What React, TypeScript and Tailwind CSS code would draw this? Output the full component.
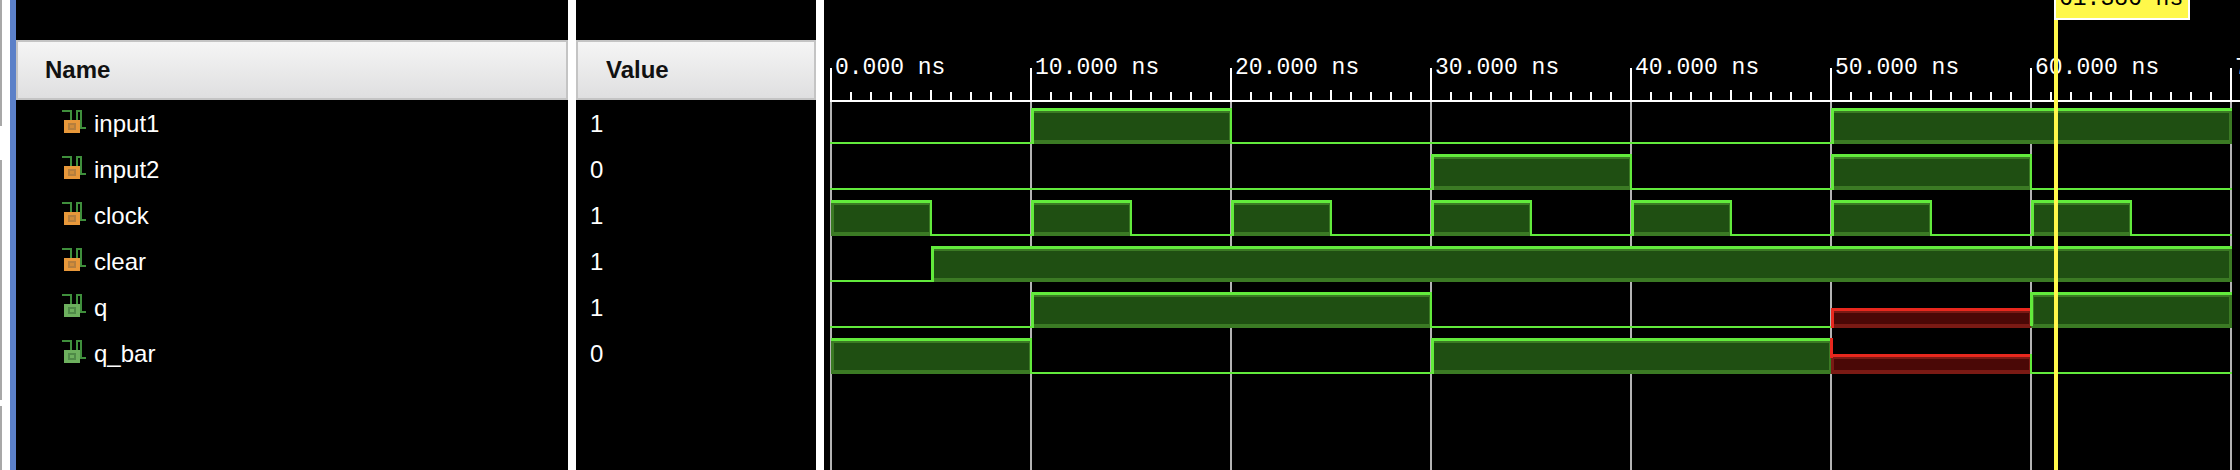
import React from 'react';

interface Signal {
  name: string;
  value: string;
  kind: 'input' | 'output';
  // [start ns, end ns, level]
  segments: [number, number, 'h' | 'l' | 'x'][];
}

const signals: Signal[] = [
  { name: 'input1', value: '1', kind: 'input', segments: [[0, 10, 'l'], [10, 20, 'h'], [20, 50, 'l'], [50, 70, 'h']] },
  { name: 'input2', value: '0', kind: 'input', segments: [[0, 30, 'l'], [30, 40, 'h'], [40, 50, 'l'], [50, 60, 'h'], [60, 70, 'l']] },
  {
    name: 'clock',
    value: '1',
    kind: 'input',
    segments: [[0, 5, 'h'], [5, 10, 'l'], [10, 15, 'h'], [15, 20, 'l'], [20, 25, 'h'], [25, 30, 'l'], [30, 35, 'h'], [35, 40, 'l'], [40, 45, 'h'], [45, 50, 'l'], [50, 55, 'h'], [55, 60, 'l'], [60, 65, 'h'], [65, 70, 'l']],
  },
  { name: 'clear', value: '1', kind: 'input', segments: [[0, 5, 'l'], [5, 70, 'h']] },
  { name: 'q', value: '1', kind: 'output', segments: [[0, 10, 'l'], [10, 30, 'h'], [30, 50, 'l'], [50, 60, 'x'], [60, 70, 'h']] },
  { name: 'q_bar', value: '0', kind: 'output', segments: [[0, 10, 'h'], [10, 30, 'l'], [30, 50, 'h'], [50, 60, 'x'], [60, 70, 'l']] },
];

const X0 = 830;
const toX = (ns: number) => X0 + ns * 20;
const GREEN = '#62ea3c';
const RED = '#e8281e';

const PortIcon = ({ kind }: { kind: Signal['kind'] }) => {
  const box = kind === 'input' ? '#e8983a' : '#6db05e';
  const inner = kind === 'input' ? '#b57f3e' : '#4f8a48';
  const core = kind === 'input' ? '#d08c3a' : '#6db05e';
  return (
    <svg width="26" height="26" viewBox="0 0 26 26" className="mt-[-2px] shrink-0" shapeRendering="crispEdges">
      <rect x="2" y="10" width="16" height="13" fill={box} />
      <rect x="6" y="13" width="8" height="7" fill={inner} />
      <rect x="8" y="15" width="4" height="3" fill={core} />
      <path d="M0 1H9V10M15 10V1H19V18H24" fill="none" stroke="#3f8f3c" strokeWidth="2" />
    </svg>
  );
};

const Wave = ({ signal, row }: { signal: Signal; row: number }) => {
  const top = 108 + row * 46;
  const low = 142 + row * 46;
  return (
    <g shapeRendering="crispEdges">
      {signal.segments.map(([a, b, level], i) => {
        const x1 = toX(a);
        const x2 = toX(b);
        const w = x2 - x1 + 2;
        const prev = i > 0 ? signal.segments[i - 1][2] : level;
        if (level === 'l') {
          return (
            <g key={i}>
              <rect x={x1} y={low} width={w} height={2} fill={GREEN} />
              {prev === 'h' && <rect x={x1} y={top} width={2} height={36} fill={GREEN} />}
              {prev === 'x' && <rect x={x1} y={top + 16} width={2} height={20} fill={GREEN} />}
            </g>
          );
        }
        const isX = level === 'x';
        const y = isX ? top + 16 : top;
        const line = isX ? RED : GREEN;
        const edge = isX ? '#7a1a14' : '#3b7a24';
        return (
          <g key={i}>
            <rect x={x1 + 1} y={y + 3} width={w - 1} height={low - y - 1} fill={edge} />
            <rect x={x1 + 4} y={y + 5} width={w - 7} height={low - y - 7} fill={isX ? '#4a0806' : '#1f4f12'} />
            <rect x={x1 + 1} y={y} width={w - 1} height={3} fill={line} />
            {prev === 'l' && <rect x={x1 + 1} y={y} width={3} height={low - y + 2} fill={line} />}
            {prev === 'h' && isX && <rect x={x1} y={top} width={3} height={20} fill={RED} />}
            {prev === 'x' && <rect x={x1} y={top} width={3} height={low - top} fill={GREEN} />}
          </g>
        );
      })}
    </g>
  );
};

const Timeline = () => {
  const ticks = Array.from({ length: 71 }, (_, i) => i);
  return (
    <svg width="1416" height="470" viewBox="824 0 1416 470" className="block">
      {[0, 10, 20, 30, 40, 50, 60, 70].map((t) => (
        <rect key={t} x={toX(t)} y={68} width={2} height={402} fill="#b4b4b4" shapeRendering="crispEdges" />
      ))}
      <g shapeRendering="crispEdges">
        <rect x={830} y={100} width={1410} height={2} fill="#ffffff" />
        {ticks.map((t) => {
          if (t % 10 === 0) return <rect key={t} x={toX(t)} y={68} width={2} height={32} fill="#ffffff" />;
          const h = t % 5 === 0 ? 10 : 8;
          return <rect key={t} x={toX(t)} y={100 - h} width={2} height={h} fill="#ffffff" />;
        })}
      </g>
      {[0, 10, 20, 30, 40, 50, 60, 70].map((t) => (
        <text key={t} x={toX(t) + 5} y={74} fill="#ffffff" fontFamily="'Liberation Mono', monospace" fontSize="23">
          {`${t}.000 ns`}
        </text>
      ))}
      {signals.map((s, i) => (
        <Wave key={s.name} signal={s} row={i} />
      ))}
      <g shapeRendering="crispEdges">
        <rect x={2054} y={0} width={4} height={470} fill="#fff84a" />
        <rect x={2054} y={0} width={136} height={20} fill="#ffffff" />
        <rect x={2056} y={0} width={132} height={18} fill="#fff84a" />
      </g>
      <text x={2059} y={5} fill="#000000" fontFamily="'Liberation Mono', monospace" fontSize="23">
        61.386 ns
      </text>
    </svg>
  );
};

const App = () => {
  return (
    <div className="flex h-[470px] w-[2240px] overflow-hidden bg-black">
      <div className="flex w-[10px] shrink-0 flex-col bg-white">
        <div className="h-[126px] w-[2px] bg-[#a8a8a8]" />
        <div className="mt-[34px] h-[240px] w-[2px] bg-[#a8a8a8]" />
        <div className="mt-[6px] h-[64px] w-[2px] bg-[#a8a8a8]" />
      </div>
      <div className="w-[6px] shrink-0 bg-[#5b80c8]" />

      <div className="w-[552px] shrink-0 pt-[40px]">
        <div className="flex h-[60px] items-center border-2 border-[#c4c4c4] bg-gradient-to-b from-[#f5f5f5] to-[#dfdfe0] pl-[27px] font-['Liberation_Sans',sans-serif] text-[24px] font-bold text-[#111]">
          Name
        </div>
        <div className="pt-px">
          {signals.map((s) => (
            <div key={s.name} className="flex h-[46px] items-center gap-[6px] pl-[46px] font-['Liberation_Sans',sans-serif] text-[24px] text-white">
              <PortIcon kind={s.kind} />
              <span>{s.name}</span>
            </div>
          ))}
        </div>
      </div>

      <div className="w-[8px] shrink-0 bg-white" />

      <div className="w-[240px] shrink-0 pt-[40px]">
        <div className="flex h-[60px] items-center border-2 border-[#c4c4c4] bg-gradient-to-b from-[#f5f5f5] to-[#dfdfe0] pl-[28px] font-['Liberation_Sans',sans-serif] text-[24px] font-bold text-[#111]">
          Value
        </div>
        <div className="pt-px">
          {signals.map((s) => (
            <div key={s.name} className="flex h-[46px] items-center pl-[14px] font-['Liberation_Sans',sans-serif] text-[24px] text-white">
              {s.value}
            </div>
          ))}
        </div>
      </div>

      <div className="w-[8px] shrink-0 bg-white" />

      <div className="min-w-0 flex-1">
        <Timeline />
      </div>
    </div>
  );
};

export default App;
